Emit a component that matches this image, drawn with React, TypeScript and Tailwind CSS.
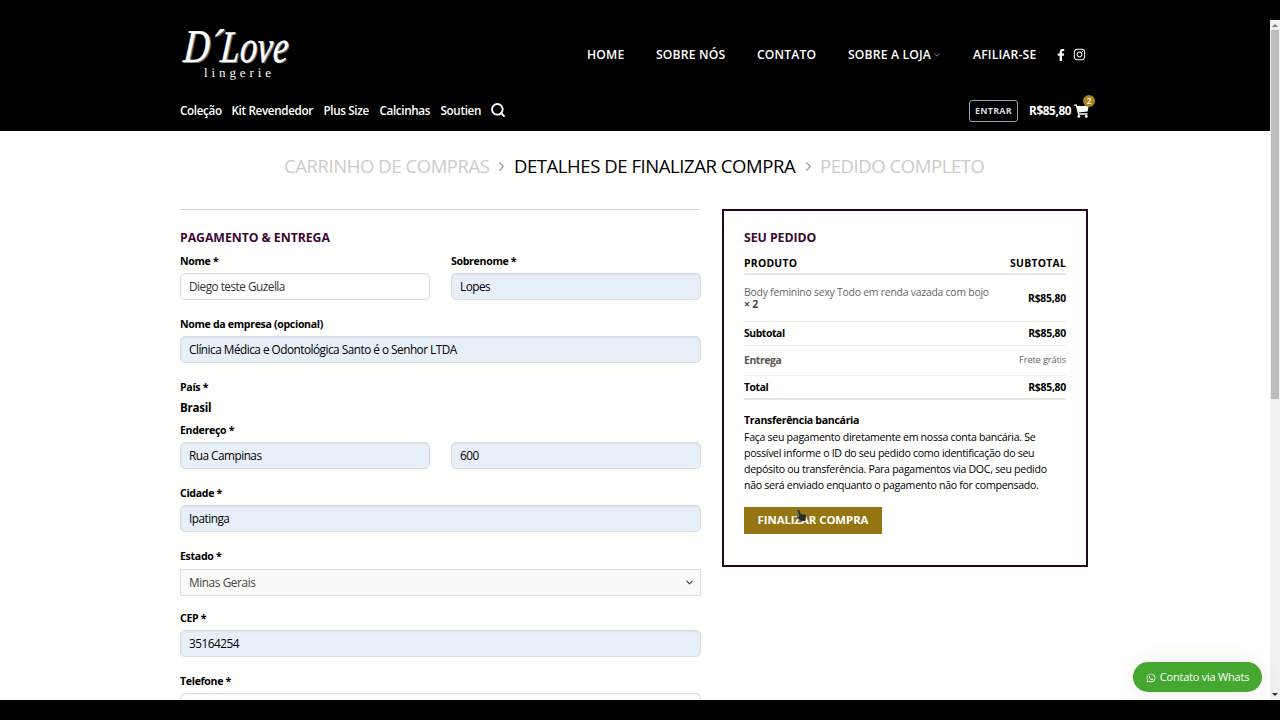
import { ChevronDown, ChevronRight, Search } from 'lucide-react';
import { FaFacebookF, FaInstagram, FaWhatsapp } from 'react-icons/fa';

const mainNav = [
  { label: 'HOME', className: 'w-[38px] mr-[31px]' },
  { label: 'SOBRE NÓS', className: 'w-[70px] mr-[31px]' },
  { label: 'CONTATO', className: 'w-[60px] mr-[31px]' },
];

const categories = [
  { label: 'Coleção', className: 'w-[51.5px]' },
  { label: 'Kit Revendedor', className: 'w-[92px]' },
  { label: 'Plus Size', className: 'w-[56px]' },
  { label: 'Calcinhas', className: 'w-[61px]' },
  { label: 'Soutien', className: 'w-[49px]' },
];

function Logo() {
  return (
    <div className="relative h-[60px] w-[120px] [text-rendering:geometricPrecision]">
      <span className="absolute left-[4px] top-[-6px] origin-left -skew-x-6 scale-x-[0.76] whitespace-nowrap font-['Liberation_Serif'] text-[47px] italic leading-[56px] tracking-[0.5px] [-webkit-text-stroke:0.5px_#fff] [text-shadow:2px_1px_0_#666]">
        D´<span className="-ml-[2px] text-[45px]">Love</span>
      </span>
      <span className="absolute left-[24px] top-[41px] font-['Liberation_Serif'] text-[13px] leading-[14px] tracking-[3.9px]">
        lingerie
      </span>
    </div>
  );
}

function CartIcon() {
  return (
    <svg width="15" height="14" viewBox="0 0 15 14" fill="none">
      <path d="M0 1.2h2.4L4.6 10h8.9" stroke="#fff" strokeWidth="1.3" />
      <path d="M3 2h11.6l-1 5.6-9.2 1z" fill="#fff" />
      <circle cx="4.8" cy="12.4" r="1.4" fill="#fff" />
      <circle cx="12.3" cy="12.4" r="1.4" fill="#fff" />
    </svg>
  );
}

function Header() {
  return (
    <header className="h-[111px] flex-none bg-black pl-[180px] text-white">
      <div className="flex h-[70px] w-[909px] items-center justify-between">
        <Logo />
        <nav className="flex items-center whitespace-nowrap text-[12.2px] font-semibold tracking-[0.15px]">
          {mainNav.map((item) => (
            <a key={item.label} className={item.className}>
              {item.label}
            </a>
          ))}
          <a className="flex w-[94px] items-center">
            SOBRE A LOJA
            <ChevronDown size={10} className="ml-px flex-none text-gray-400" />
          </a>
          <a className="ml-[31px] w-[65px]">AFILIAR-SE</a>
          <FaFacebookF size={12} className="ml-[17px]" />
          <FaInstagram size={13} className="ml-[6px] mr-[3px]" />
        </nav>
      </div>
      <div className="flex h-[41px] w-[909px] items-center justify-between">
        <nav className="flex items-center whitespace-nowrap text-[11.7px] font-semibold tracking-[-0.36px]">
          {categories.map((item) => (
            <a key={item.label} className={item.className}>
              {item.label}
            </a>
          ))}
          <Search size={16} strokeWidth={2.8} />
        </nav>
        <div className="flex items-center">
          <button className="h-[22px] w-[49px] rounded-[3px] border border-gray-400 text-[9px] font-bold tracking-[0.2px] text-gray-300">
            ENTRAR
          </button>
          <span className="ml-[11px] w-[45px] whitespace-nowrap text-[11.8px] font-bold tracking-[-0.4px]">
            R$85,80
          </span>
          <span className="relative">
            <CartIcon />
            <span className="absolute -top-[9px] left-[9px] flex size-[12px] items-center justify-center rounded-full bg-[#a8841f] text-[8px] font-semibold">
              2
            </span>
          </span>
        </div>
      </div>
    </header>
  );
}

function Steps() {
  return (
    <div className="ml-[284px] flex h-[70px] items-center whitespace-nowrap text-[18.5px] tracking-[-0.43px] text-[#ccc]">
      <span className="w-[205px]">CARRINHO DE COMPRAS</span>
      <ChevronRight size={15} className="mx-[5px] flex-none text-gray-400" />
      <span className="w-[282px] text-black">DETALHES DE FINALIZAR COMPRA</span>
      <ChevronRight size={15} className="mx-[4.5px] flex-none text-gray-400" />
      <span>PEDIDO COMPLETO</span>
    </div>
  );
}

function Field({ label, value, filled = true }: { label?: string; value: string; filled?: boolean }) {
  return (
    <div className="min-w-0 flex-1">
      <p className="mb-[2px] h-5 text-[10.6px] font-bold leading-5 tracking-[-0.33px]">{label}</p>
      <div
        className={`h-[27px] rounded-[5px] border border-[#d9dcde] px-[8px] text-[11.8px] leading-[25px] tracking-[-0.51px] shadow-[inset_0_1px_2px_rgba(0,0,0,0.06)] ${
          filled ? 'bg-[#e7eff9]' : 'text-[#333]'
        }`}
      >
        {value}
      </div>
    </div>
  );
}

function BillingForm() {
  return (
    <section className="w-[521px] border-t border-[#d5d5d5] pt-[18px]">
      <h3 className="mb-[3px] h-5 text-[12.3px] font-bold leading-5 tracking-[-0.06px] text-[#3c0836]">
        PAGAMENTO &amp; ENTREGA
      </h3>
      <div className="mb-[14.2px] flex gap-[21px]">
        <Field label="Nome *" value="Diego teste Guzella" filled={false} />
        <Field label="Sobrenome *" value="Lopes" />
      </div>
      <div className="mb-[14.2px] flex">
        <Field label="Nome da empresa (opcional)" value="Clínica Médica e Odontológica Santo é o Senhor LTDA" />
      </div>
      <p className="h-5 text-[10.6px] font-bold leading-5 tracking-[-0.33px]">País *</p>
      <p className="mb-[2.5px] mt-[0.5px] h-5 text-[11.6px] font-bold leading-5 tracking-[-0.25px]">Brasil</p>
      <div className="mb-[14px] flex gap-[21px]">
        <Field label="Endereço *" value="Rua Campinas" />
        <Field value="600" />
      </div>
      <div className="mb-[14.1px] flex">
        <Field label="Cidade *" value="Ipatinga" />
      </div>
      <p className="mb-[2.2px] h-5 text-[10.6px] font-bold leading-5 tracking-[-0.33px]">Estado *</p>
      <div className="mb-[12px] flex h-[27px] items-center justify-between border border-[#ddd] bg-[#fafaf8] pl-[8px] pr-[5px] pt-px text-[11.8px] tracking-[-0.4px] text-[#444]">
        Minas Gerais
        <ChevronDown size={11} strokeWidth={2.5} className="-mt-px" />
      </div>
      <div className="mb-[14.2px] flex">
        <Field label="CEP *" value="35164254" />
      </div>
      <div className="flex">
        <Field label="Telefone *" value="" filled={false} />
      </div>
    </section>
  );
}

function OrderSummary() {
  return (
    <section className="relative h-[358px] w-[366px] border-2 border-[#250720] px-[20px] pt-[17px]">
      <h3 className="h-5 text-[12.3px] font-bold leading-5 tracking-[-0.06px] text-[#3c0836]">SEU PEDIDO</h3>
      <div className="mt-[5px] flex h-[22px] justify-between border-b-2 border-[#e6e8e6] text-[10.4px] font-bold leading-[20px] tracking-[0.25px]">
        <span>PRODUTO</span>
        <span>SUBTOTAL</span>
      </div>
      <div className="flex h-[47px] items-center justify-between border-b border-[#ececec] text-[10.4px] tracking-[-0.22px]">
        <span className="whitespace-nowrap leading-[12.5px] text-[#666]">
          Body feminino sexy Todo em renda vazada com bojo
          <br />
          <b className="text-[#444]">× 2</b>
        </span>
        <b className="pt-px">R$85,80</b>
      </div>
      <div className="flex h-[24px] items-center justify-between border-b border-[#f0f0ee] text-[10.4px] font-bold tracking-[-0.25px]">
        <span className="tracking-[-0.42px]">Subtotal</span>
        <span>R$85,80</span>
      </div>
      <div className="flex h-[30px] items-center justify-between border-b border-[#f0f0ee] text-[10.4px] tracking-[-0.4px] text-[#555]">
        <b>Entrega</b>
        <span className="text-[9.4px] tracking-[-0.2px] text-[#666]">Frete grátis</span>
      </div>
      <div className="flex h-[24px] items-center justify-between border-b-2 border-[#e6e8e6] pt-px text-[10.4px] font-bold tracking-[-0.25px]">
        <span className="tracking-[-0.42px]">Total</span>
        <span>R$85,80</span>
      </div>
      <p className="mt-[12px] text-[10.6px] font-bold leading-[17px] tracking-[-0.32px]">Transferência bancária</p>
      <p className="whitespace-nowrap text-[10.6px] leading-[16px] tracking-[-0.3px]">
        Faça seu pagamento diretamente em nossa conta bancária. Se
        <br />
        possível informe o ID do seu pedido como identificação do seu
        <br />
        depósito ou transferência. Para pagamentos via DOC, seu pedido
        <br />
        não será enviado enquanto o pagamento não for compensado.
      </p>
      <button className="relative mt-[14px] h-[27px] w-[138px] whitespace-nowrap bg-[#957412] pb-px text-[11.4px] font-bold tracking-[-0.07px] text-white">
        FINALIZAR COMPRA
        <svg className="absolute left-[52px] top-[2px]" width="11" height="13" viewBox="0 0 11 13">
          <path
            d="M2.2.8c.8-.3 1.4.1 1.6.8l.8 3 4.2.9c1 .2 1.4.8 1.3 1.7l-.4 3-.9 1.9H4.5L1 8.4c-.5-.8.2-1.5 1-1.1l1 .5L1.6 2C1.5 1.5 1.7 1 2.2.8z"
            fill="#2b2b2b"
            stroke="#777"
            strokeWidth=".5"
          />
        </svg>
      </button>
    </section>
  );
}

function Scrollbar() {
  return (
    <div className="flex w-[10px] flex-none flex-col items-center bg-[#f1f1f1]">
      <div className="flex h-[10px] items-center">
        <div className="border-x-[3px] border-b-[3px] border-x-transparent border-b-[#777]" />
      </div>
      <div className="h-[369px] w-[8px] bg-[#bdbdbd]" />
      <div className="mb-[4px] mt-auto border-x-[3px] border-t-[3px] border-x-transparent border-t-[#333]" />
    </div>
  );
}

export default function App() {
  return (
    <div className="h-[720px] w-[1280px] overflow-hidden bg-black py-5 font-['Open_Sans',sans-serif] text-black">
      <div className="relative flex h-[680px]">
        <div className="flex min-w-0 flex-1 flex-col overflow-hidden bg-[#fffffd]">
          <Header />
          <main className="flex-none">
            <Steps />
            <div className="ml-[180px] mt-[8px] flex items-start gap-[21px]">
              <BillingForm />
              <OrderSummary />
            </div>
          </main>
        </div>
        <Scrollbar />
        <a className="absolute bottom-[8px] right-[18px] flex h-[30px] w-[129px] items-center justify-center gap-[4px] whitespace-nowrap rounded-full bg-[#45a72f] pt-px text-[11px] tracking-[-0.22px] text-white shadow-[0_0_24px_rgba(0,0,0,0.08)]">
          <FaWhatsapp size={10} />
          Contato via Whats
        </a>
      </div>
    </div>
  );
}
